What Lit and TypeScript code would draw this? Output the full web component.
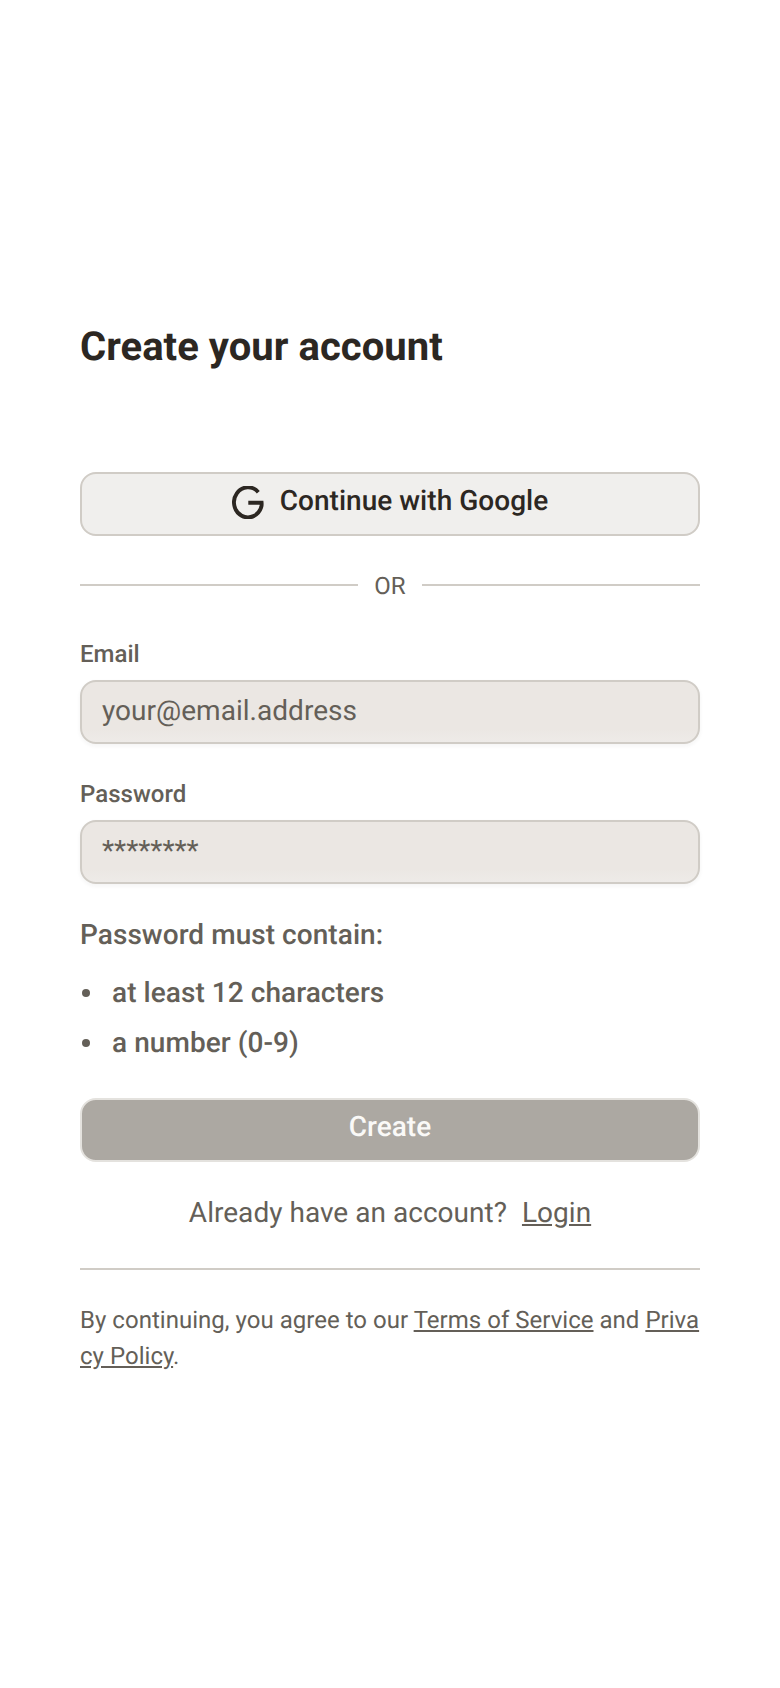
import { LitElement, html, css } from "lit";
import { customElement } from "lit/decorators.js";

@customElement("app-root")
export class AppRoot extends LitElement {
  static styles = css`
    :host { display: block; background: #fff; height: 1688px; font-family: Roboto, "Liberation Sans", sans-serif; color: #645f58; text-rendering: geometricPrecision; }
    * { box-sizing: border-box; letter-spacing: .001em; }
    .page { padding: 323px 80px 0; min-height: 1688px; display: flex; flex-direction: column; }
    h1 { margin: 0 0 101px; font-size: 40px; line-height: 48px; font-weight: 700; color: #2c2722; }
    .btn { display: flex; justify-content: center; align-items: flex-start; width: 100%; height: 64px; border-radius: 16px; border: 2px solid #d0ccc6; font-size: 28px; font-weight: 500; line-height: 42px; padding-top: 6px; }
    .google { background: #f0efed; color: #2c2722; gap: 16px; }
    .google svg { width: 32px; height: 33px; margin-top: 6px; display: block; }
    .or { display: flex; align-items: center; gap: 16px; margin: 32px 0; font-size: 24px; line-height: 36px; height: 36px; }
    .or i { flex: 1; height: 2px; margin-bottom: 2px; background: #d0ccc6; }
    label { display: block; font-size: 24px; font-weight: 500; line-height: 36px; margin-bottom: 8px; }
    .input { height: 64px; border-radius: 16px; border: 2px solid #d0ccc6; background: linear-gradient(#ebe7e3 78%, #eeebe8); font-size: 28px; line-height: 42px; padding: 8px 20px; margin-bottom: 32px; box-shadow: 0 2px 4px rgba(44,39,34,.05); overflow: hidden; }
    .rules { font-size: 28px; font-weight: 500; line-height: 38px; margin-bottom: 18px; letter-spacing: .002em; }
    ul { list-style: none; margin: 0 0 34px; padding: 0 0 0 2px; font-size: 28px; font-weight: 500; line-height: 42px; }
    li { display: flex; align-items: center; gap: 22px; letter-spacing: .002em; }
    li::before { content: ""; width: 8px; height: 8px; border-radius: 50%; background: currentColor; }
    li + li { margin-top: 8px; }
    .create { background: #aca8a2; border-color: #e4e2de; color: #faf9f7; }
    .login { margin-top: 30px; text-align: center; font-size: 28px; line-height: 42px; }
    .login a { margin-left: 8px; }
    a { color: inherit; text-decoration: underline; }
    hr { border: 0; height: 2px; background: #d0ccc6; margin: 34px 0 32px; }
    .legal { margin: 0; font-size: 24px; line-height: 36px; word-break: break-all; }
  `;

  render() {
    return html`<main class="page">
      <h1>Create your account</h1>
      <div class="btn google">
        <svg viewBox="0 0 32 33" fill="none"><path d="M26.3 6.2A14 15 0 1 0 29.4 20.6Q29.8 18.8 29.6 16.8H16.3" stroke="#2c2722" stroke-width="3.9"/></svg>
        <span>Continue with Google</span>
      </div>
      <div class="or"><i></i><span>OR</span><i></i></div>
      <label>Email</label>
      <div class="input">your@email.address</div>
      <label>Password</label>
      <div class="input">********</div>
      <div class="rules">Password must contain:</div>
      <ul><li>at least 12 characters</li><li>a number (0-9)</li></ul>
      <div class="btn create"><span>Create</span></div>
      <div class="login">Already have an account? <a href="#">Login</a></div>
      <hr />
      <p class="legal">By continuing, you agree to our <a href="#">Terms of Service</a> and <a href="#">Privacy Policy</a>.</p>
    </main>`;
  }
}
